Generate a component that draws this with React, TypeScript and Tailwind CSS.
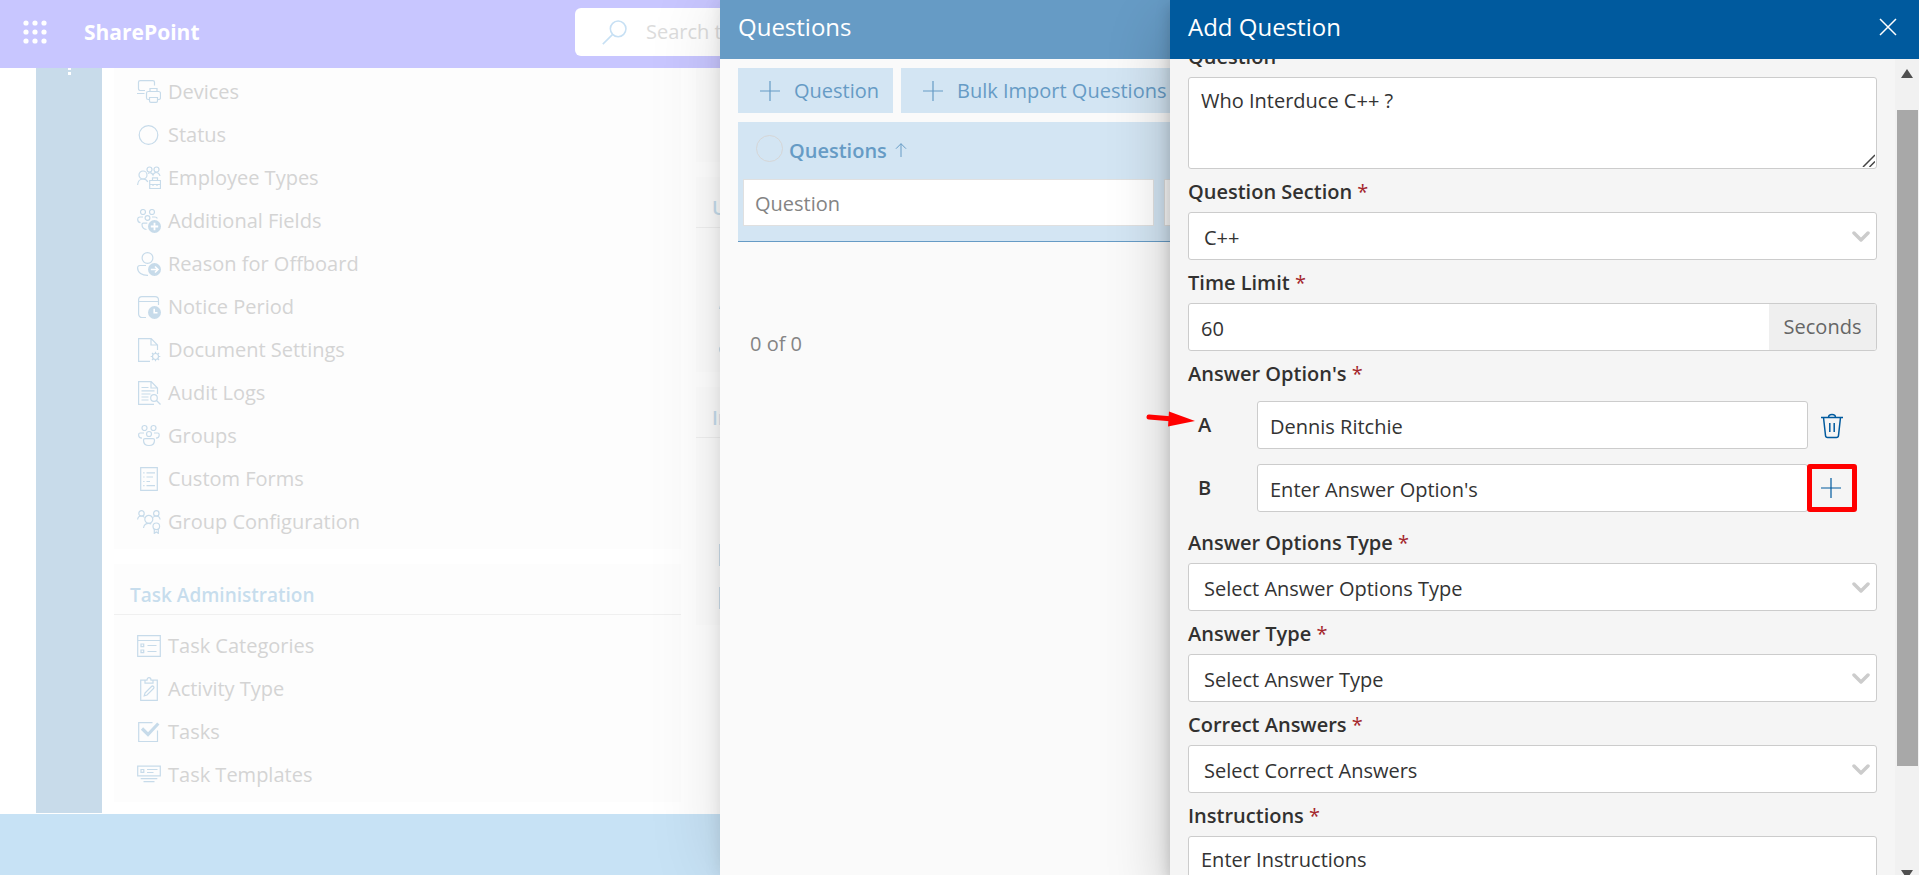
import type { ReactNode } from "react";

type IconName =
  | "devices" | "status" | "employee" | "fields" | "offboard" | "notice" | "docset" | "audit"
  | "groups" | "forms" | "groupconf" | "categories" | "activity" | "tasks" | "templates";

const shapes: Record<IconName, ReactNode> = {
  devices: (
    <>
      <path d="M8 10.500H3.200a1.700 1.700 0 0 1-1.700-1.700V2.200C1.500 1.300 2.300.6 3.200.6h12.600c1 0 1.700.7 1.700 1.700v3.200M0 13.500h7.500" />
      <path d="M13 11.500V8.500h7v3M12.500 19.500h-1.200c-1 0-1.800-.8-1.800-1.800v-4.400c0-1 .8-1.800 1.800-1.800h10.400c1 0 1.800.8 1.800 1.800v4.400c0 1-.8 1.800-1.800 1.800h-1.200M12.500 17.500h8v3.500c0 .8-.6 1.400-1.400 1.400h-5.200c-.8 0-1.400-.6-1.400-1.400z" />
    </>
  ),
  status: <circle cx="11.500" cy="12" r="9.300" />,
  employee: (
    <>
      <circle cx="6" cy="9" r="4" />
      <path d="M.6 19c.2-3.500 2.400-6 5.400-6 2.400 0 4 1.400 4.800 3" />
      <circle cx="12.500" cy="3.500" r="2.500" />
      <circle cx="19.500" cy="3.500" r="2.500" />
      <path d="M11 7.500c2-1.500 4-.5 5 1.500 1-2.500 3-3 5-2 1.200.8 1.800 1.700 2 3M12.700 14.500h10.800v8H12.700zM12.700 18.500h10.800M15.500 14.500v-2.700h5v2.700M16 18v2M20 18v2" />
    </>
  ),
  fields: (
    <>
      <circle cx="6" cy="3" r="2.500" />
      <circle cx="15" cy="3" r="2.500" />
      <circle cx="10.500" cy="9" r="2.400" />
      <path d="M6 8H3C1.500 8 .7 9 .7 10.500c0 1.800 1 3 2.800 3.200M15 8h3c1.200 0 2 .5 2.300 1.500M9.500 20.500C6.500 20 5 18 5 15.500c0-.8.500-1.300 1.300-1.300h4" />
      <circle cx="17.500" cy="17.500" r="6.500" className="fill-current" stroke="none" />
      <path d="M17.500 13.800v7.400M13.800 17.500h7.400" stroke="#fff" strokeWidth="1.800" />
    </>
  ),
  offboard: (
    <>
      <circle cx="10.500" cy="6" r="5.400" />
      <path d="M9 13.500H3c-1.400 0-2.400 1-2.400 2.400C.6 20.500 5 23.500 11 23.300" />
      <circle cx="17.500" cy="17.500" r="6.500" className="fill-current" stroke="none" />
      <path d="M13.800 17.500h7M18 14.500l3 3-3 3" stroke="#fff" strokeWidth="1.600" />
    </>
  ),
  notice: (
    <>
      <path d="M9 22.500H5A3.400 3.400 0 0 1 1.600 19V5C1.600 3 3 1.600 5 1.600h13C20 1.600 21.500 3 21.500 5v5M1.600 6.500h20" />
      <circle cx="17.500" cy="17.500" r="6.500" className="fill-current" stroke="none" />
      <path d="M17.200 13.800v4h3.300" stroke="#fff" strokeWidth="1.600" />
    </>
  ),
  docset: (
    <>
      <path d="M13 23.300H1.600V.7h12.600l6.300 6.300v5M14 .7V7h6.500" />
      <circle cx="18.500" cy="18.500" r="3" />
      <path d="M18.500 13.700v1.800M18.500 21.500v1.800M13.700 18.500h1.800M21.500 18.500h1.800M15 15l1.400 1.400M20.600 20.600L22 22M15 22l1.400-1.400M20.600 16.400L22 15" />
    </>
  ),
  audit: (
    <>
      <path d="M17 23.300H1.600V.7h12.600l6.300 6.300v6M14 .7V7h6.500M4.500 6.500h7M4.500 9.800h13M4.500 13h9M4.500 16h7M4.500 19h7" />
      <circle cx="17" cy="17" r="3.300" />
      <path d="M19.500 19.500l4 4" />
    </>
  ),
  groups: (
    <>
      <circle cx="7.500" cy="4" r="2.500" />
      <circle cx="16.500" cy="4" r="2.500" />
      <circle cx="12" cy="10" r="2.500" />
      <path d="M7 9H3.200C2.200 9 1.600 9.700 1.600 10.700c0 2 1.400 3.300 3.400 3.500M17 9h3.600c1 0 1.600.7 1.600 1.700 0 2-1.200 3.300-3.200 3.500M8 14.700h8c.9 0 1.500.6 1.500 1.500 0 3.300-2 5.300-5.500 5.300s-5.500-2-5.500-5.300c0-.9.600-1.500 1.500-1.500z" />
    </>
  ),
  forms: (
    <path d="M3.700.7h16.600v22.600H3.700zM6.200 5.800h1.300M9.500 5.800h8.500M6.200 10h1.300M9.500 10h6.500M6.200 14.500h1.300M9.500 14.500h3.500M6.200 18.700h1.300M9.500 18.700h8.500" />
  ),
  groupconf: (
    <>
      <circle cx="4.500" cy="3.400" r="2.700" />
      <circle cx="19.300" cy="3.400" r="2.700" />
      <circle cx="11.800" cy="9.300" r="4" />
      <path d="M.6 9.500C.8 7.500 2 6 4.300 6c1.500 0 2.600.5 3.200 1.500M16 7.500c.7-1 1.800-1.500 3.200-1.500 2.300 0 3.600 1.500 3.900 3.500M6.500 18c.4-3 2.500-4.700 5.300-4.700 1 0 1.800.2 2.500.6" />
      <circle cx="19.300" cy="16.300" r="3.300" />
      <path d="M17.300 19v4.300l2-1.400 2 1.400V19" />
    </>
  ),
  categories: (
    <path d="M.7 1.700h22.600v20.600H.7zM.7 6.500h22.600M4 10h2.700v2.700H4zM4 16h2.700v2.700H4zM10.500 11.500h9M10.500 17.500h9" />
  ),
  activity: (
    <path d="M8 3.200H3.700v20.100h16.600V3.200H16M8 6.200V3.200h2c0-1.500.8-2.500 2-2.500s2 1 2 2.500h2v3zM8 16l6.500-6.500c.6-.6 1.400-.6 2 0s.6 1.400 0 2L10 18l-2.800.8z" />
  ),
  tasks: (
    <>
      <path d="M15.500 2.700H1.700v18.800h18.800v-11" />
      <path d="M5 8.500l6 6L21.300 3.500" strokeWidth="3.200" />
    </>
  ),
  templates: (
    <path d="M.7 3.200h22.600v9.600H.7zM4 6.500h2.800v2.800H4zM10 6.500h10.500M10 9.500h6.500M3.700 15.700h16.600M6.500 18.700h11" />
  ),
};

function MenuIcon({ name }: { name: IconName }) {
  return (
    <svg viewBox="0 0 24 24" className="size-6 shrink-0 text-[#c7dbea]" fill="none" stroke="currentColor" strokeWidth="1.200" aria-hidden="true">
      {shapes[name]}
    </svg>
  );
}

type Item = { icon: IconName; label?: string };

const settings: Item[] = [
  { icon: "devices", label: "Devices" },
  { icon: "status", label: "Status" },
  { icon: "employee", label: "Employee Types" },
  { icon: "fields", label: "Additional Fields" },
  { icon: "offboard", label: "Reason for Offboard" },
  { icon: "notice", label: "Notice Period" },
  { icon: "docset", label: "Document Settings" },
  { icon: "audit", label: "Audit Logs" },
  { icon: "groups", label: "Groups" },
  { icon: "forms", label: "Custom Forms" },
  { icon: "groupconf", label: "Group Configuration" },
];

const tasks: Item[] = [
  { icon: "categories", label: "Task Categories" },
  { icon: "activity", label: "Activity Type" },
  { icon: "tasks", label: "Tasks" },
  { icon: "templates", label: "Task Templates" },
];

function Card({ title, items }: { title?: string; items: Item[] }) {
  return (
    <section className="bg-[#fdfdfd] pb-[6px]">
      {title && (
        <h2 className="mb-2 flex h-[51px] items-center border-b border-[#f0f0f0] px-4 pt-3 text-[19px] font-semibold text-[#c7dded]">
          {title}
        </h2>
      )}
      <ul className={title ? "pt-px" : "pt-[2px]"}>
        {items.map((item, i) => (
          <li key={i}>
            <a href="#" className="flex h-[43px] items-center gap-[7px] pl-[23px] text-xl text-[#d4d4d4]">
              <MenuIcon name={item.icon} />
              {item.label}
            </a>
          </li>
        ))}
      </ul>
    </section>
  );
}

function Plus({ className }: { className: string }) {
  return (
    <svg viewBox="0 0 20 20" className={className} fill="none" stroke="currentColor" strokeWidth="1.200" aria-hidden="true">
      <path d="M10 0v20M0 10h20" />
    </svg>
  );
}

function FieldLabel({ htmlFor, required = true, children }: { htmlFor: string; required?: boolean; children: ReactNode }) {
  return (
    <label htmlFor={htmlFor} className="block h-[43px] text-xl leading-[45px] font-semibold text-[#323130]">
      {children}
      {required && <span className="font-normal text-[#a4262c]"> *</span>}
    </label>
  );
}

function SelectField({ id, label, value }: { id: string; label: string; value: string }) {
  return (
    <div>
      <FieldLabel htmlFor={id}>{label}</FieldLabel>
      <div className="relative">
        <select id={id} className="block h-12 w-full appearance-none rounded-[3px] border border-[#ccc] bg-white px-[15px] pt-1 text-xl text-[#333]">
          <option>{value}</option>
        </select>
        <svg viewBox="0 0 18 12" className="pointer-events-none absolute top-[19px] right-[7px] h-3 w-[18px]" fill="none" stroke="#ccc" strokeWidth="3.500" strokeLinecap="round" strokeLinejoin="round" aria-hidden="true">
          <path d="M2 2l7 7 7-7" />
        </svg>
      </div>
    </div>
  );
}

const inputBox = "block h-12 rounded-[3px] border border-[#ccc] bg-white px-3 pt-[2px] text-xl text-[#333] placeholder:text-[#333] placeholder:opacity-100";

function SitePage() {
  return (
    <div className="flex h-full flex-col">
      <header className="flex h-[68px] shrink-0 items-center bg-[#c8c6ff] text-white">
        <button aria-label="App launcher" className="mb-1 ml-[23px]">
          <svg viewBox="0 0 24 24" className="size-6" fill="currentColor" aria-hidden="true">
            {[3, 12, 21].flatMap((y) => [3, 12, 21].map((x) => <circle key={`${x}-${y}`} cx={x} cy={y} r="2.600" />))}
          </svg>
        </button>
        <a href="#" className="mb-[2px] ml-[37px] w-[491px] text-[21px] font-bold">SharePoint</a>
        <div className="mb-1 flex h-12 flex-1 items-center gap-[19px] rounded-md bg-white pl-[27px]">
          <svg viewBox="0 0 24 24" className="size-[25px] shrink-0 text-[#c7e0f4]" fill="none" stroke="currentColor" strokeWidth="1.500" aria-hidden="true">
            <circle cx="15.500" cy="8.500" r="7.500" />
            <path d="M10 14L.8 23.200" />
          </svg>
          <input aria-label="Search" placeholder="Search this site" className="w-full text-xl placeholder:text-[#dcdcdc]" />
        </div>
      </header>
      <div className="flex min-h-0 flex-1 overflow-hidden bg-white pl-9">
        <nav aria-label="Site" className="mb-px flex w-[66px] shrink-0 flex-col items-center bg-[#c8dbea]">
          <svg viewBox="0 0 3 7" className="h-[7px] w-[3px]" fill="#fff" aria-hidden="true">
            <path d="M0 0h3v2H0zM0 4h3v3H0z" />
          </svg>
        </nav>
        <main className="flex flex-1 items-start gap-[15px] pl-3">
          <div className="flex w-[567px] shrink-0 flex-col gap-[15px]">
            <Card items={settings} />
            <Card title="Task Administration" items={tasks} />
          </div>
          <div className="flex flex-1 flex-col gap-[15px]">
            <Card items={[{ icon: "status" }, { icon: "groups" }]} />
            <Card title="U" items={[{ icon: "status" }, { icon: "employee" }, { icon: "offboard" }]} />
            <Card title="In" items={[{ icon: "status" }, { icon: "groups" }, { icon: "categories" }, { icon: "categories" }]} />
          </div>
        </main>
      </div>
      <footer className="h-[61px] shrink-0 bg-[#c7e2f5]" />
    </div>
  );
}

function QuestionsPanel() {
  return (
    <section className="absolute inset-y-0 right-0 w-[1199px] bg-[#fafafa] shadow-[0_0_70px_rgba(0,0,0,0.12),0_0_16px_rgba(0,0,0,0.1)]">
      <h1 className="flex h-[59px] items-center bg-[#669bc5] px-[18px] pb-[6px] text-2xl text-white">Questions</h1>
      <div className="px-[18px] pt-[9px]">
        <div className="flex gap-2 text-xl text-[#669bc5]">
          <button className="flex h-[45px] items-center gap-[14px] bg-[#d3e5f3] pr-[14px] pl-[22px]">
            <Plus className="size-5" />
            Question
          </button>
          <button className="flex h-[45px] items-center gap-[14px] bg-[#d3e5f3] pr-[14px] pl-[22px]">
            <Plus className="size-5" />
            Bulk Import Questions
          </button>
        </div>
        <div className="mt-[9px] h-[120px] border-b border-[#669bc5] bg-[#d3e5f3]">
          <div className="flex h-[57px] items-center pl-[18px] text-xl font-semibold text-[#669bc5]">
            <input type="checkbox" aria-label="Select all questions" className="mb-1 size-[27px] appearance-none rounded-full border border-[#d6d6d6]" />
            <span className="ml-[6px]">Questions</span>
            <svg viewBox="0 0 12 14" className="mb-[2px] ml-2 h-[14px] w-3" fill="none" stroke="currentColor" aria-hidden="true">
              <path d="M6 14V.7M1 5.700l5-5 5 5" />
            </svg>
          </div>
          <div className="flex gap-[10px] px-[5px]">
            <input aria-label="Filter by question" placeholder="Question" className="h-[47px] w-[411px] border border-[#e0e0e0] bg-white px-[11px] pt-[2px] text-xl placeholder:text-[#848484]" />
            <input aria-label="Filter by section" className="h-[47px] min-w-0 flex-1 border border-[#e0e0e0] bg-white px-[11px] text-xl" />
          </div>
        </div>
        <p className="mt-[88px] pl-3 text-xl leading-7 text-[#848484]">0 of 0</p>
      </div>
    </section>
  );
}

function AddQuestionPanel() {
  return (
    <section className="absolute inset-y-0 right-0 flex w-[749px] flex-col bg-[#f5f5f5] shadow-[0_26px_58px_rgba(0,0,0,0.22),0_5px_14px_rgba(0,0,0,0.18)]">
      <header className="flex h-[59px] shrink-0 items-center justify-between bg-[#005a9e] pr-[22px] pb-[6px] pl-[18px] text-white">
        <h1 className="text-2xl">Add Question</h1>
        <button aria-label="Close">
          <svg viewBox="0 0 18 18" className="size-[18px]" fill="none" stroke="currentColor" strokeWidth="1.500" aria-hidden="true">
            <path d="M1 1l16 16M17 1L1 17" />
          </svg>
        </button>
      </header>
      <div className="flex min-h-0 flex-1">
        <form className="min-w-0 flex-1 overflow-hidden pr-[18px] pl-[18px]">
          <div className="-mt-[25px]">
            <FieldLabel htmlFor="question" required={false}>Question</FieldLabel>
            <div className="relative">
              <textarea id="question" defaultValue="Who Interduce C++ ?" className="block h-[92px] w-full resize-none rounded-[3px] border border-[#ccc] bg-white px-3 pt-[9px] text-xl leading-7 text-[#333]" />
              <svg viewBox="0 0 13 13" className="pointer-events-none absolute right-[2px] bottom-[2px] size-[13px]" stroke="#444" strokeWidth="1.500" aria-hidden="true">
                <path d="M1 13L13 1M7.500 13L13 7.500" />
              </svg>
            </div>
          </div>
          <SelectField id="section" label="Question Section" value="C++" />
          <FieldLabel htmlFor="limit">Time Limit</FieldLabel>
          <div className="flex h-12 overflow-hidden rounded-[3px] border border-[#ccc] bg-white text-xl">
            <input id="limit" defaultValue="60" className="min-w-0 flex-1 px-3 pt-1 text-[#333]" />
            <span className="flex w-[107px] items-center justify-center bg-[#efefef] text-[#666]">Seconds</span>
          </div>
          <FieldLabel htmlFor="answer-a">Answer Option's</FieldLabel>
          <div className="flex flex-col gap-[15px] pt-[7px] pb-2">
            <div className="flex items-center">
              <label htmlFor="answer-a" className="w-[69px] pl-[10px] text-xl font-semibold text-[#323130]">A</label>
              <input id="answer-a" defaultValue="Dennis Ritchie" className={`${inputBox} min-w-0 flex-1`} />
              <button type="button" aria-label="Delete answer A" className="mr-5 flex h-12 w-[49px] items-center justify-center pt-[2px] pr-[2px] text-[#005a9e]">
                <svg viewBox="0 0 24 26" className="h-[26px] w-6" fill="none" stroke="currentColor" strokeWidth="1.500" aria-hidden="true">
                  <path d="M1 4.500h22M8.500 4.500C8.500 2.500 10 1.500 12 1.500s3.500 1 3.500 3M3.500 4.500l2 18c.1 1.200.9 2 2.100 2h8.800c1.200 0 2-.8 2.100-2l2-18M9.800 10v9M14.200 10v9" />
                </svg>
              </button>
            </div>
            <div className="flex items-center">
              <label htmlFor="answer-b" className="w-[69px] pl-[10px] text-xl font-semibold text-[#323130]">B</label>
              <input id="answer-b" placeholder="Enter Answer Option's" className={`${inputBox} min-w-0 flex-1`} />
              <button type="button" aria-label="Add answer" className="mr-5 -ml-px flex h-12 w-[50px] items-center justify-center rounded-[3px] border-5 border-[#ff0000] pr-[2px] text-[#005a9e]">
                <Plus className="size-5" />
              </button>
            </div>
          </div>
          <SelectField id="options-type" label="Answer Options Type" value="Select Answer Options Type" />
          <SelectField id="answer-type" label="Answer Type" value="Select Answer Type" />
          <SelectField id="correct" label="Correct Answers" value="Select Correct Answers" />
          <FieldLabel htmlFor="instructions">Instructions</FieldLabel>
          <textarea id="instructions" placeholder="Enter Instructions" className="block h-[92px] w-full resize-none rounded-[3px] border border-[#ccc] bg-white px-3 pt-[9px] text-xl leading-7 placeholder:text-[#333]" />
        </form>
        <div className="flex w-6 shrink-0 flex-col items-center bg-[#f1f1f1] pt-[10px]" aria-hidden="true">
          <svg viewBox="0 0 12 9" className="h-[9px] w-3" fill="#505050"><path d="M6 0l6 9H0z" /></svg>
          <div className="mt-8 h-[656px] w-[21px] bg-[#a8a8a8]" />
          <svg viewBox="0 0 12 9" className="mt-auto -mb-1 h-[9px] w-3 shrink-0" fill="#505050"><path d="M6 9l6-9H0z" /></svg>
        </div>
      </div>
      <svg viewBox="0 0 50 16" className="absolute top-[411px] -left-6 h-4 w-[50px]" aria-hidden="true">
        <path d="M3 6l24 2" stroke="#ff0000" strokeWidth="5" strokeLinecap="round" />
        <path d="M23 .5L49 10 22 15.500z" fill="#ff0000" />
      </svg>
    </section>
  );
}

export default function App() {
  return (
    <div className="relative h-screen overflow-hidden font-['Open_Sans','Noto_Sans',sans-serif]">
      <SitePage />
      <QuestionsPanel />
      <AddQuestionPanel />
    </div>
  );
}
